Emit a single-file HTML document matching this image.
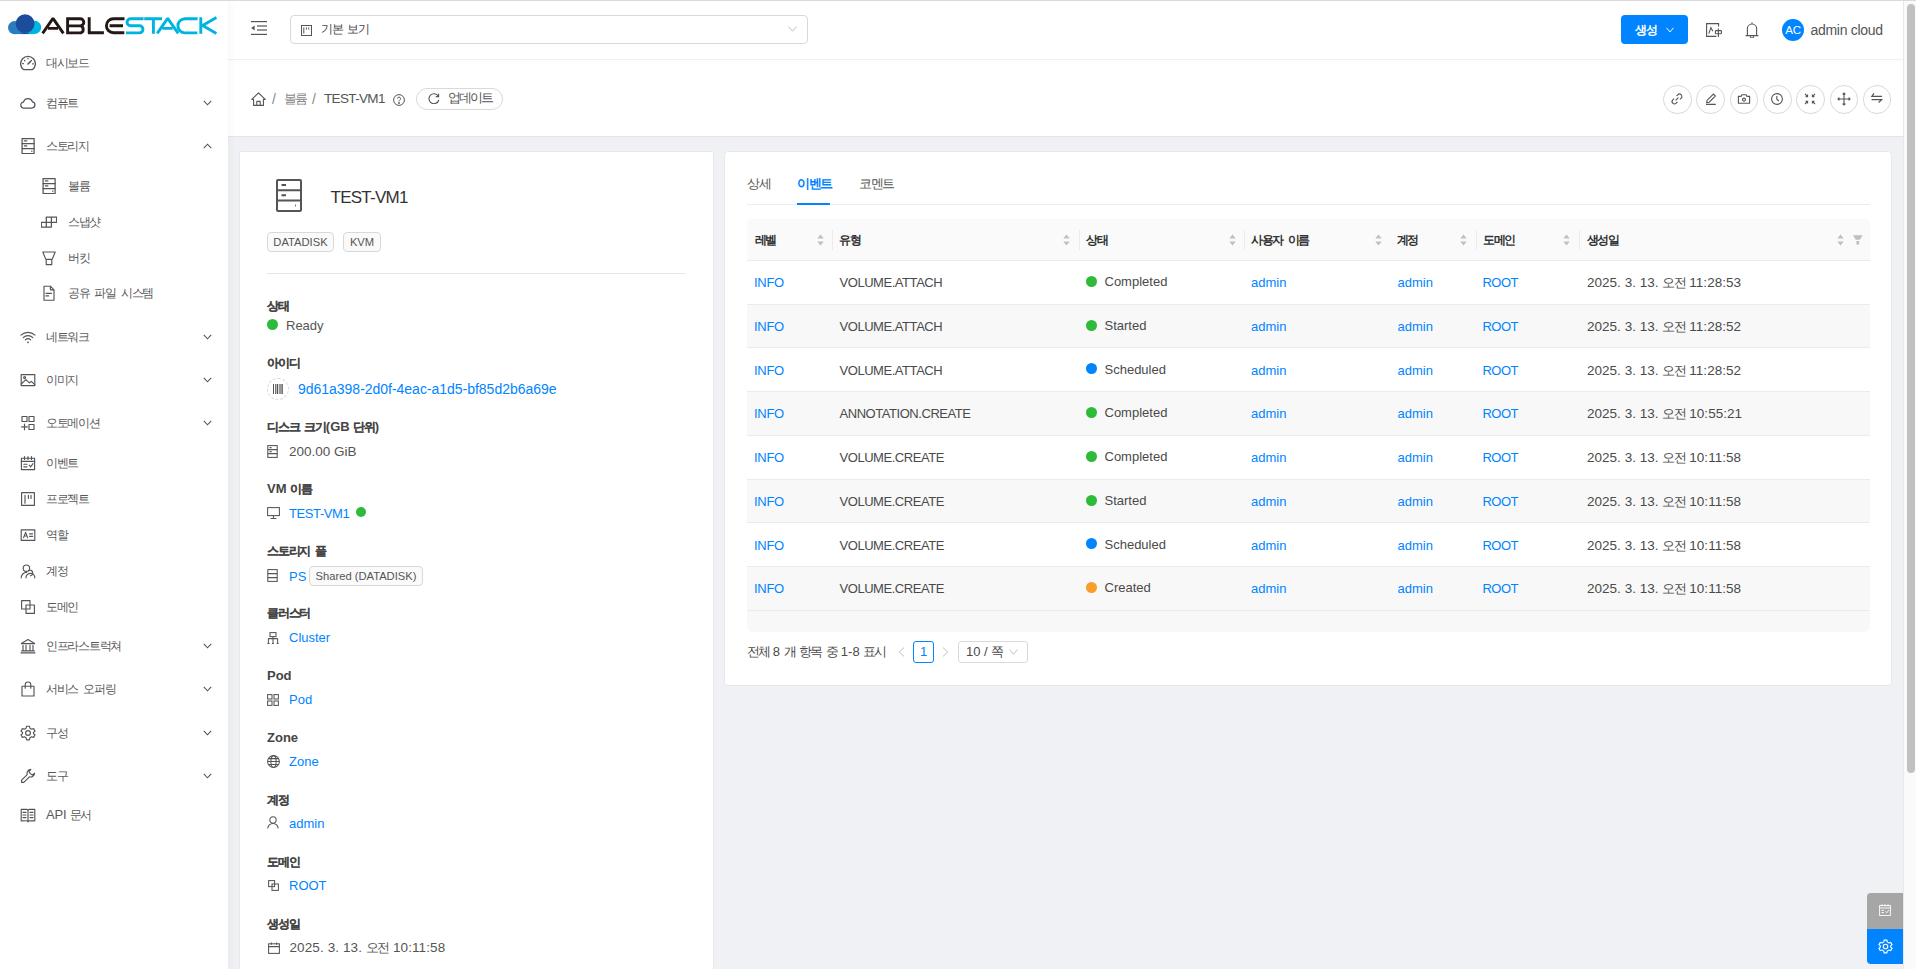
<!DOCTYPE html>
<html><head><meta charset="utf-8">
<style>
*{box-sizing:border-box;margin:0;padding:0}
html,body{width:1916px;height:969px;overflow:hidden;background:#fff}
body{position:relative;font-family:"Liberation Sans",sans-serif;font-size:14px;color:#333}
.abs{position:absolute}
#topline{left:0;top:0;width:1916px;height:1px;background:#d8dadb;z-index:40}
#sider{left:0;top:0;width:228px;height:969px;background:#fff;z-index:5;box-shadow:2px 0 8px rgba(0,0,0,0.04)}
#header{left:228px;top:0;width:1675px;height:60px;background:#fff;border-bottom:1px solid #eef0f3;box-shadow:0 2px 3px rgba(0,0,0,0.012);z-index:2}
#crumb{left:228px;top:60px;width:1675px;height:77px;background:#fff;border-bottom:1px solid #e4e4e4}
#content{left:228px;top:137px;width:1675px;height:832px;background:#f0f1f4}
#scroll{left:1903px;top:0;width:13px;height:969px;background:#fafafa;border-left:1px solid #e8e8e8;z-index:30}
#thumb{left:3px;top:4px;width:8px;height:769px;background:#c1c1c1;border-radius:4px}
.card{background:#fff;border:1px solid #e8e8e8;border-radius:2px}
.mi{position:absolute;left:0;width:228px;height:20px;color:#595959;font-size:14px;line-height:20px}
.mi svg{position:absolute;left:20px;top:2px}
.mi span{position:absolute;left:46px;top:0;white-space:nowrap}
.mi .chev{position:absolute;left:203px;top:7px}
.sub svg{left:41px}
.sub span{left:68px}
.kr{font-size:12.5px;letter-spacing:-1.5px;word-spacing:3px;white-space:nowrap}
.mi span{font-size:12px;letter-spacing:-1.3px;word-spacing:3px}
.tag{height:20px;background:#fafafa;border:1px solid #d9d9d9;border-radius:4px;font-size:11.2px;line-height:18px;color:#555;text-align:center;white-space:nowrap;letter-spacing:0}
.lbl{left:267px;font-weight:bold;color:#454545;font-size:13px;white-space:nowrap}
.val{font-size:13px;color:#555;white-space:nowrap}
.link{color:#0084ff}
.k{font-size:12.5px;letter-spacing:-1.4px;word-spacing:3px}
.lbl .k{font-size:12px;letter-spacing:-1.25px;word-spacing:3px;-webkit-text-stroke:0.1px #454545}
.tab{font-size:13px;color:#555;white-space:nowrap}
.tab .k{font-size:12.5px;letter-spacing:-1.5px}
.th{font-size:13px;font-weight:bold;color:#333;white-space:nowrap}
.th .k{font-size:12.2px;letter-spacing:-1.5px;word-spacing:3px}
.td{font-size:13px;color:#4a4a4a;white-space:nowrap}
.td.link,.val.link{color:#0084ff}
</style></head>
<body>
<div id="topline" class="abs"></div>

<!-- SIDEBAR -->
<div id="sider" class="abs">
<svg class="abs" style="left:0;top:0" width="228" height="50" viewBox="0 0 228 50">
<circle cx="14.6" cy="27.6" r="6.6" fill="#2a7cc0"/>
<circle cx="34.6" cy="27.4" r="6.6" fill="#00b4e1"/>
<path d="M14.6,34.1H25V27H14.6Z" fill="#2a7cc0"/><path d="M25,34.1H34.6V27H25Z" fill="#00b4e1"/>
<circle cx="25.1" cy="23.6" r="9.4" fill="#1c4c9c"/>
<path d="M20.6,31.8 Q25.2,34.4 29.8,31.8 L28,34.1 H22.6 Z" fill="#1c4c9c"/>
<g fill="none" stroke="#231815" stroke-width="2.9" stroke-linejoin="bevel">
<path d="M42.6,33.4L53,18.4L63.4,33.4M48,28.4H58"/>
<path d="M67.6,17.4V33.4 M66.2,18.7H80.2A3.6,3.6 0 0 1 80.2,25.9H70.4 M67.6,25.9H80.8A3.75,3.75 0 0 1 80.8,32.9H66.2"/>
<path d="M89.2,17.2V33.4 M88,32.7H103.9"/>
<path d="M124.5,18.7H113.4A7,7 0 0 0 113.4,32.7H124.3 M109.6,25.8H123"/>
</g>
<g fill="none" stroke="#00b4e0" stroke-width="2.9" stroke-linejoin="bevel">
<path d="M143.6,18.7H130.6A3.55,3.55 0 0 0 130.6,25.8H139.4A3.55,3.55 0 0 1 139.4,32.9H126"/>
<path d="M144.2,18.7H162 M153.4,18.7V33.8"/>
<path d="M157.2,33.4L167.7,18.4L178.2,33.4M162.5,28.4H172.6"/>
<path d="M197.6,18.7H185A7,7 0 0 0 185,32.9H197.4"/>
<path d="M200.8,17.2V33.8 M216.4,17.6L202.6,25.6L216.4,33.6"/>
</g>
</svg>
<div class="mi" style="top:53px"><svg width="16" height="16" viewBox="0 0 16 16" stroke="#555" stroke-width="1.15" fill="none" stroke-linecap="round" stroke-linejoin="round"><path d="M3.4,14.6 A7.4,7.4 0 1 1 12.6,14.6 Z" stroke-width="1.3"/><path d="M8,9 L10.4,6.6" stroke-width="1.5"/><path d="M2.6,8.6h0.8M4.5,5.4l0.3,0.3M8,3.3v0.5M11.4,5.5l-0.3,0.3M13.4,8.8h-0.8" stroke-width="1.3"/></svg><span>대시보드</span></div>
<div class="mi" style="top:93px"><svg width="16" height="16" viewBox="0 0 16 16" stroke="#555" stroke-width="1.15" fill="none" stroke-linecap="round" stroke-linejoin="round"><path d="M3.9,13 H12.2 A3.1,3.1 0 0 0 12.5,6.9 A4.7,4.7 0 0 0 3.5,7.2 A2.9,2.9 0 0 0 3.9,13 Z" stroke-width="1.25"/></svg><span>컴퓨트</span><svg class="chev" width="9" height="6" viewBox="0 0 9 6" stroke="#555" stroke-width="1.1" fill="none"><path d="M0.8,0.8L4.5,4.8L8.2,0.8"/></svg></div>
<div class="mi" style="top:136px"><svg width="16" height="16" viewBox="0 0 16 16" stroke="#555" stroke-width="1.15" fill="none" stroke-linecap="round" stroke-linejoin="round"><rect x="2.1" y="0.5" width="12" height="15" stroke-width="1.25"/><path d="M2.1,5.5H14.1M2.1,10.5H14.1M4.4,2.9H6.8M4.4,7.9H6.8M11.6,13h0.4" stroke-width="1.25"/></svg><span>스토리지</span><svg class="chev" width="9" height="6" viewBox="0 0 9 6" stroke="#555" stroke-width="1.1" fill="none"><path d="M0.8,5.2L4.5,1.2L8.2,5.2"/></svg></div>
<div class="mi sub" style="top:176px"><svg width="16" height="16" viewBox="0 0 16 16" stroke="#555" stroke-width="1.15" fill="none" stroke-linecap="round" stroke-linejoin="round"><rect x="2.1" y="0.5" width="12" height="15" stroke-width="1.25"/><path d="M2.1,5.5H14.1M2.1,10.5H14.1M4.4,2.9H6.8M4.4,7.9H6.8M11.6,13h0.4" stroke-width="1.25"/></svg><span>볼륨</span></div>
<div class="mi sub" style="top:212px"><svg width="16" height="16" viewBox="0 0 16 16" stroke="#555" stroke-width="1.15" fill="none" stroke-linecap="round" stroke-linejoin="round"><path d="M5.3,13.1V3H15.6V8.3H0.3V13.1H10.4V3" stroke-width="1.25"/></svg><span>스냅샷</span></div>
<div class="mi sub" style="top:248px"><svg width="16" height="16" viewBox="0 0 16 16" stroke="#555" stroke-width="1.15" fill="none" stroke-linecap="round" stroke-linejoin="round"><path d="M1.8,2H14.2L11.2,9.4H4.8Z M5.2,9.4V14.6H10.8V9.4"/></svg><span>버킷</span></div>
<div class="mi sub" style="top:283px"><svg width="16" height="16" viewBox="0 0 16 16" stroke="#555" stroke-width="1.15" fill="none" stroke-linecap="round" stroke-linejoin="round"><path d="M3,1.2H9.4L13,4.8V15.2H3Z M9.4,1.2V4.8H13 M5,8.4H10.4M5,10.9H7.6"/></svg><span>공유 파일 시스템</span></div>
<div class="mi" style="top:327px"><svg width="16" height="16" viewBox="0 0 16 16" stroke="#555" stroke-width="1.15" fill="none" stroke-linecap="round" stroke-linejoin="round"><path d="M1,6.2A10.2,10.2 0 0 1 15,6.2 M3.2,8.6A7,7 0 0 1 12.8,8.6 M5.3,10.9A3.9,3.9 0 0 1 10.7,10.9"/><circle cx="8" cy="13.3" r="0.9" fill="#555" stroke="none"/></svg><span>네트워크</span><svg class="chev" width="9" height="6" viewBox="0 0 9 6" stroke="#555" stroke-width="1.1" fill="none"><path d="M0.8,0.8L4.5,4.8L8.2,0.8"/></svg></div>
<div class="mi" style="top:370px"><svg width="16" height="16" viewBox="0 0 16 16" stroke="#555" stroke-width="1.15" fill="none" stroke-linecap="round" stroke-linejoin="round"><rect x="1.2" y="2.6" width="13.6" height="11"/><path d="M1.2,12L6,7.6L9.4,10.8L11.2,9.4L14.8,12.6"/><circle cx="4.6" cy="5.6" r="1"/></svg><span>이미지</span><svg class="chev" width="9" height="6" viewBox="0 0 9 6" stroke="#555" stroke-width="1.1" fill="none"><path d="M0.8,0.8L4.5,4.8L8.2,0.8"/></svg></div>
<div class="mi" style="top:413px"><svg width="16" height="16" viewBox="0 0 16 16" stroke="#555" stroke-width="1.15" fill="none" stroke-linecap="round" stroke-linejoin="round"><rect x="2" y="1.5" width="5" height="5"/><rect x="9" y="1.5" width="5" height="5"/><rect x="9" y="9.5" width="5" height="5"/><path d="M4.5,9V14.8M1.6,11.9H7.4"/></svg><span>오토메이션</span><svg class="chev" width="9" height="6" viewBox="0 0 9 6" stroke="#555" stroke-width="1.1" fill="none"><path d="M0.8,0.8L4.5,4.8L8.2,0.8"/></svg></div>
<div class="mi" style="top:453px"><svg width="16" height="16" viewBox="0 0 16 16" stroke="#555" stroke-width="1.15" fill="none" stroke-linecap="round" stroke-linejoin="round"><rect x="1.4" y="3.2" width="13.2" height="11.4"/><path d="M1.4,6.4H14.6M4.5,1.6V4.4M8,1.6V4.4M11.5,1.6V4.4M3.8,9.2H7M3.8,11.8H7M9.2,10.2L10.6,11.8L13,8.6"/></svg><span>이벤트</span></div>
<div class="mi" style="top:489px"><svg width="16" height="16" viewBox="0 0 16 16" stroke="#555" stroke-width="1.15" fill="none" stroke-linecap="round" stroke-linejoin="round"><rect x="1.6" y="1.6" width="12.8" height="12.8"/><path d="M5,4.2V12.2M8.4,4.2V7.4M11,4.2V7.4"/></svg><span>프로젝트</span></div>
<div class="mi" style="top:525px"><svg width="16" height="16" viewBox="0 0 16 16" stroke="#555" stroke-width="1.15" fill="none" stroke-linecap="round" stroke-linejoin="round"><rect x="1.2" y="2.8" width="13.6" height="10.6"/><path d="M3.6,10.6L5.6,5.4L7.6,10.6M4.2,9H7M9.6,6.8H12.6M9.6,9.4H12.6"/></svg><span>역할</span></div>
<div class="mi" style="top:561px"><svg width="16" height="16" viewBox="0 0 16 16" stroke="#555" stroke-width="1.15" fill="none" stroke-linecap="round" stroke-linejoin="round"><circle cx="6.4" cy="5.2" r="3.2"/><path d="M1.2,14.8A5.4,5.4 0 0 1 6.6,9.4 M8.6,7.6A2.8,2.8 0 1 1 10.4,12.8 M6,14.8A4.4,4.4 0 0 1 14.8,14.8"/></svg><span>계정</span></div>
<div class="mi" style="top:597px"><svg width="16" height="16" viewBox="0 0 16 16" stroke="#555" stroke-width="1.15" fill="none" stroke-linecap="round" stroke-linejoin="round"><rect x="1.6" y="1.6" width="8.4" height="8.4"/><rect x="6" y="6" width="8.4" height="8.4"/></svg><span>도메인</span></div>
<div class="mi" style="top:636px"><svg width="16" height="16" viewBox="0 0 16 16" stroke="#555" stroke-width="1.15" fill="none" stroke-linecap="round" stroke-linejoin="round"><path d="M1.4,5.6L8,1.6L14.6,5.6Z M3,7.4V12.6M6,7.4V12.6M10,7.4V12.6M13,7.4V12.6M1.6,12.8H14.4M1,14.8H15"/></svg><span>인프라스트럭쳐</span><svg class="chev" width="9" height="6" viewBox="0 0 9 6" stroke="#555" stroke-width="1.1" fill="none"><path d="M0.8,0.8L4.5,4.8L8.2,0.8"/></svg></div>
<div class="mi" style="top:679px"><svg width="16" height="16" viewBox="0 0 16 16" stroke="#555" stroke-width="1.15" fill="none" stroke-linecap="round" stroke-linejoin="round"><path d="M2,5.2H14V15H2Z M5.2,7.2V3.8A2.8,2.8 0 0 1 10.8,3.8V7.2"/></svg><span>서비스 오퍼링</span><svg class="chev" width="9" height="6" viewBox="0 0 9 6" stroke="#555" stroke-width="1.1" fill="none"><path d="M0.8,0.8L4.5,4.8L8.2,0.8"/></svg></div>
<div class="mi" style="top:723px"><svg width="16" height="16" viewBox="0 0 16 16" stroke="#555" stroke-width="1.15" fill="none" stroke-linecap="round" stroke-linejoin="round"><path d="M6.6,1.2H9.4L9.9,3.2L11.6,4.2L13.6,3.6L15,6L13.5,7.4V8.6L15,10L13.6,12.4L11.6,11.8L9.9,12.8L9.4,14.8H6.6L6.1,12.8L4.4,11.8L2.4,12.4L1,10L2.5,8.6V7.4L1,6L2.4,3.6L4.4,4.2L6.1,3.2Z"/><circle cx="8" cy="8" r="2.4"/></svg><span>구성</span><svg class="chev" width="9" height="6" viewBox="0 0 9 6" stroke="#555" stroke-width="1.1" fill="none"><path d="M0.8,0.8L4.5,4.8L8.2,0.8"/></svg></div>
<div class="mi" style="top:766px"><svg width="16" height="16" viewBox="0 0 16 16" stroke="#555" stroke-width="1.15" fill="none" stroke-linecap="round" stroke-linejoin="round"><path d="M10.8,1.4A4,4 0 0 0 7.2,6.6L1.6,12.2V14.4H3.8L9.4,8.8A4,4 0 0 0 14.6,5.2L12.4,7L10.4,5.6L9,3.6Z"/></svg><span>도구</span><svg class="chev" width="9" height="6" viewBox="0 0 9 6" stroke="#555" stroke-width="1.1" fill="none"><path d="M0.8,0.8L4.5,4.8L8.2,0.8"/></svg></div>
<div class="mi" style="top:805px"><svg width="16" height="16" viewBox="0 0 16 16" stroke="#555" stroke-width="1.15" fill="none" stroke-linecap="round" stroke-linejoin="round"><path d="M1.2,2.4H6.6A1.4,1.4 0 0 1 8,3.8A1.4,1.4 0 0 1 9.4,2.4H14.8V13.8H9.4A1.4,1.4 0 0 0 8,15A1.4,1.4 0 0 0 6.6,13.8H1.2Z M8,3.8V15 M3,5.4H6M3,8H6M3,10.6H6M10,5.4H13M10,8H13M10,10.6H13"/></svg><span style="font-size:13px;letter-spacing:-0.2px;word-spacing:0">API <span style="position:static;font-size:12px;letter-spacing:-1.3px">문서</span></span></div>
</div>

<!-- HEADER -->
<div id="header" class="abs">
<svg class="abs" style="left:23px;top:21px" width="16" height="14" viewBox="0 0 16 14" fill="#555"><rect x="0" y="0" width="16" height="1.2"/><rect x="6" y="4.4" width="10" height="1.2"/><rect x="6" y="8.4" width="10" height="1.2"/><rect x="0" y="12.8" width="16" height="1.2"/><path d="M0.2,7L3.6,4.6V9.4Z"/></svg>
<div class="abs" style="left:62px;top:15px;width:518px;height:29px;border:1px solid #d9d9d9;border-radius:4px"></div>
<svg class="abs" style="left:73px;top:25px" width="11" height="11" viewBox="0 0 11 11" fill="none" stroke="#555" stroke-width="1"><rect x="0.5" y="0.5" width="10" height="10"/><path d="M2.8,2.4V8.6M5.4,2.4V4.6M7.8,2.4V4.6"/></svg>
<div class="abs kr" style="left:93px;top:21px;color:#444;font-size:12px;letter-spacing:-1.3px">기본 보기</div>
<svg class="abs" style="left:560px;top:26px" width="9" height="6" viewBox="0 0 9 6" fill="none" stroke="#bfbfbf" stroke-width="1"><path d="M0.5,0.5L4.5,5.2L8.5,0.5"/></svg>
<div class="abs" style="left:1393px;top:15px;width:67px;height:29px;background:#0084ff;border-radius:4px"></div>
<div class="abs kr" style="left:1407px;top:22px;color:#fff;font-size:12px;letter-spacing:-1.2px;font-weight:bold">생성</div>
<svg class="abs" style="left:1437.5px;top:26.5px" width="8" height="6" viewBox="0 0 9 6" fill="none" stroke="#fff" stroke-width="1.1"><path d="M0.5,0.5L4.5,5.2L8.5,0.5"/></svg>
<svg class="abs" style="left:1478px;top:23px" width="17" height="15" viewBox="0 0 17 15" fill="none" stroke="#555" stroke-width="1.1"><path d="M12.6,3.4V0.6H0.6V13.4H10.4"/><path d="M2.8,10.6L4.9,4.6L6.8,8.2"/><rect x="9.4" y="7.6" width="6" height="3.2" rx="0.6"/><path d="M12.4,5.4V13.9"/></svg>
<svg class="abs" style="left:1517px;top:22px" width="14" height="16" viewBox="0 0 14 16" fill="none" stroke="#555" stroke-width="1.1"><path d="M7,0.4V1.8M2.4,13.4V6.6A4.6,4.6 0 0 1 11.6,6.6V13.4M0.6,13.6H13.4M5.4,14.4A1.6,1.6 0 0 0 8.6,14.4"/></svg>
<div class="abs" style="left:1554px;top:19px;width:22px;height:22px;border-radius:50%;background:#0084ff;color:#fff;font-size:11.5px;line-height:22px;text-align:center;letter-spacing:-0.3px">AC</div>
<div class="abs" style="left:1582.5px;top:22px;color:#555;font-size:14px;letter-spacing:-0.3px">admin cloud</div>
</div>
<div id="crumb" class="abs">
<svg class="abs" style="left:23px;top:32px" width="15" height="14" viewBox="0 0 15 14" fill="none" stroke="#555" stroke-width="1.1" stroke-linejoin="round"><path d="M7.5,0.8L0.8,7.4H2.6V13.4H12.4V7.4H14.2Z M5.8,13.4V9.4H9.2V13.4"/></svg>
<div class="abs" style="left:44px;top:31px;color:#888">/</div>
<div class="abs kr" style="left:55.5px;top:30.5px;color:#888;letter-spacing:-1.8px">볼륨</div>
<div class="abs" style="left:84px;top:31px;color:#888">/</div>
<div class="abs" style="left:96px;top:31px;color:#555;font-size:13.5px;letter-spacing:-0.65px">TEST-VM1</div>
<svg class="abs" style="left:165px;top:34px" width="12" height="12" viewBox="0 0 12 12" fill="none" stroke="#555" stroke-width="1"><circle cx="6" cy="6" r="5.4"/><path d="M4.4,4.6A1.6,1.6 0 1 1 6.6,6.2C6.1,6.5 6,6.8 6,7.4"/><circle cx="6" cy="9" r="0.5" fill="#555"/></svg>
<div class="abs" style="left:188px;top:28px;width:87px;height:22px;border:1px solid #d9d9d9;border-radius:11px"></div>
<svg class="abs" style="left:200px;top:33px" width="12" height="11" viewBox="0 0 12 11" fill="none" stroke="#555" stroke-width="1.1"><path d="M10.4,3.4A5,5 0 1 0 10.8,7"/><path d="M10.6,0.8V3.6H7.8" /></svg>
<div class="abs kr" style="left:219.5px;top:30px;color:#555;letter-spacing:-1.8px">업데이트</div>
</div>
<div id="content" class="abs"></div>

<div class="abs card" style="left:239px;top:151px;width:475px;height:830px"></div>
<svg class="abs" style="left:276px;top:179px" width="26" height="33" viewBox="0 0 26 33" fill="none" stroke="#555" stroke-width="2"><rect x="1" y="1" width="24" height="31" rx="1"/><path d="M1,11.2H25M1,21.4H25M5.5,6H10M5.5,16.2H10M19,26.6h0.8"/></svg>
<div class="abs" style="left:330.5px;top:187.5px;font-size:17px;color:#333;letter-spacing:-0.75px">TEST-VM1</div>
<div class="abs tag" style="left:267px;top:232px;width:67px">DATADISK</div>
<div class="abs tag" style="left:343px;top:232px;width:38px">KVM</div>
<div class="abs" style="left:267px;top:273px;width:419px;height:1px;background:#e8e8e8"></div>

<div class="abs lbl" style="top:298px"><span class="k">상태</span></div>
<div class="abs" style="left:267px;top:319px;width:11px;height:11px;border-radius:50%;background:#2dbb3a"></div>
<div class="abs val" style="left:286px;top:318px">Ready</div>

<div class="abs lbl" style="top:355px"><span class="k">아이디</span></div>
<div class="abs" style="left:267px;top:378px;width:22px;height:22px;border-radius:50%;border:1px dashed #d9d9d9"></div>
<svg class="abs" style="left:273px;top:384px" width="10" height="10" viewBox="0 0 10 10" fill="#555"><rect x="0" y="0" width="1" height="10"/><rect x="2" y="0" width="0.8" height="10"/><rect x="3.6" y="0" width="1.4" height="10"/><rect x="5.8" y="0" width="0.8" height="10"/><rect x="7.4" y="0" width="1.2" height="10"/><rect x="9.2" y="0" width="0.8" height="10"/></svg>
<div class="abs val link" style="left:298px;top:381px;font-size:14px;letter-spacing:-0.02px">9d61a398-2d0f-4eac-a1d5-bf85d2b6a69e</div>

<div class="abs lbl" style="top:419px"><span class="k">디스크 크기</span>(GB <span class="k">단위</span>)</div>
<svg class="abs" style="left:267px;top:445px" width="11" height="13" viewBox="0 0 11 13" fill="none" stroke="#555" stroke-width="1.05"><rect x="0.8" y="0.6" width="9.4" height="11.8"/><path d="M0.8,4.6H10.2M0.8,8.6H10.2M2.6,2.6H4.6M2.6,6.6H4.6"/></svg>
<div class="abs val" style="left:289px;top:444px;font-size:13.5px">200.00 GiB</div>

<div class="abs lbl" style="top:481px">VM <span class="k">이름</span></div>
<svg class="abs" style="left:267px;top:507px" width="13" height="12" viewBox="0 0 13 12" fill="none" stroke="#555" stroke-width="1.05"><rect x="0.6" y="0.6" width="11.8" height="8"/><path d="M6.5,8.6V11.2M3.6,11.4H9.4"/></svg>
<div class="abs val link" style="left:289px;top:506px;letter-spacing:-0.4px">TEST-VM1</div>
<div class="abs" style="left:356px;top:507px;width:10px;height:10px;border-radius:50%;background:#2dbb3a"></div>

<div class="abs lbl" style="top:543px"><span class="k">스토리지 풀</span></div>
<svg class="abs" style="left:267px;top:569px" width="11" height="13" viewBox="0 0 11 13" fill="none" stroke="#555" stroke-width="1.05"><rect x="0.8" y="0.6" width="9.4" height="11.8"/><path d="M0.8,4.6H10.2M0.8,8.6H10.2"/></svg>
<div class="abs val link" style="left:289px;top:569px">PS</div>
<div class="abs tag" style="left:309px;top:566px;width:114px;height:20px">Shared (DATADISK)</div>

<div class="abs lbl" style="top:605px"><span class="k">클러스터</span></div>
<svg class="abs" style="left:267px;top:632px" width="12" height="12" viewBox="0 0 12 12" fill="none" stroke="#555" stroke-width="1.05"><rect x="3" y="0.6" width="6" height="4"/><path d="M6,4.6V6.6M1.4,6.6H10.6M1.4,6.6V11.4M6,6.6V11.4M10.6,6.6V11.4M0.4,11.4H2.6M5,11.4H7M9.6,11.4H11.6"/></svg>
<div class="abs val link" style="left:289px;top:630px">Cluster</div>

<div class="abs lbl" style="top:668px">Pod</div>
<svg class="abs" style="left:267px;top:694px" width="12" height="12" viewBox="0 0 12 12" fill="none" stroke="#555" stroke-width="1.05"><rect x="0.6" y="0.6" width="4.4" height="4.4"/><rect x="7" y="0.6" width="4.4" height="4.4"/><rect x="0.6" y="7" width="4.4" height="4.4"/><rect x="7" y="7" width="4.4" height="4.4"/></svg>
<div class="abs val link" style="left:289px;top:692px">Pod</div>

<div class="abs lbl" style="top:730px">Zone</div>
<svg class="abs" style="left:267px;top:755px" width="13" height="13" viewBox="0 0 13 13" fill="none" stroke="#555" stroke-width="1.05"><circle cx="6.5" cy="6.5" r="5.9"/><ellipse cx="6.5" cy="6.5" rx="2.6" ry="5.9"/><path d="M0.6,6.5H12.4M1.4,3.6H11.6M1.4,9.4H11.6"/></svg>
<div class="abs val link" style="left:289px;top:754px">Zone</div>

<div class="abs lbl" style="top:792px"><span class="k">계정</span></div>
<svg class="abs" style="left:267px;top:816px" width="12" height="13" viewBox="0 0 12 13" fill="none" stroke="#555" stroke-width="1.05"><circle cx="6" cy="4" r="3.2"/><path d="M0.8,12.6A5.2,5.2 0 0 1 11.2,12.6"/></svg>
<div class="abs val link" style="left:289px;top:816px">admin</div>

<div class="abs lbl" style="top:854px"><span class="k">도메인</span></div>
<svg class="abs" style="left:268px;top:880px" width="11" height="11" viewBox="0 0 11 11" fill="none" stroke="#555" stroke-width="1.05"><rect x="0.6" y="0.6" width="6" height="6"/><rect x="4" y="4" width="6.4" height="6.4"/></svg>
<div class="abs val link" style="left:289px;top:878px">ROOT</div>

<div class="abs lbl" style="top:916px"><span class="k">생성일</span></div>
<svg class="abs" style="left:267.5px;top:942px" width="12" height="12" viewBox="0 0 12 12" fill="none" stroke="#555" stroke-width="1.05"><rect x="0.6" y="1.8" width="10.8" height="9.6"/><path d="M0.6,4.6H11.4M3.4,0.4V2.8M8.6,0.4V2.8"/></svg>
<div class="abs val" style="left:289.5px;top:940px;font-size:13.5px;letter-spacing:0.1px">2025. 3. 13. <span class="k">오전</span> 10:11:58</div>

<div class="abs card" style="left:724px;top:151px;width:1168px;height:535px;border-radius:4px"></div>
<div class="abs tab" style="left:747px;top:176px"><span class="k">상세</span></div>
<div class="abs tab" style="left:797px;top:176px;color:#0084ff;font-weight:bold"><span class="k">이벤트</span></div>
<div class="abs tab" style="left:859px;top:176px"><span class="k">코멘트</span></div>
<div class="abs" style="left:747px;top:204px;width:1123px;height:1px;background:#ececec"></div>
<div class="abs" style="left:797px;top:203px;width:33px;height:2px;background:#0084ff"></div>
<div class="abs" style="left:747px;top:219px;width:1123px;height:42px;background:#fafafa;border-bottom:1px solid #ebebeb;border-radius:5px 5px 0 0"></div>
<div class="abs th" style="left:754.5px;top:232px"><span class="k">레벨</span></div>
<svg class="abs" style="left:816.6px;top:233.5px" width="7" height="12" viewBox="0 0 7 12" fill="#bfbfbf"><path d="M0.3,4.6L3.5,0.4L6.7,4.6Z M0.3,7.4L3.5,11.6L6.7,7.4Z"/></svg>
<div class="abs th" style="left:839.0px;top:232px"><span class="k">유형</span></div>
<svg class="abs" style="left:1063.4px;top:233.5px" width="7" height="12" viewBox="0 0 7 12" fill="#bfbfbf"><path d="M0.3,4.6L3.5,0.4L6.7,4.6Z M0.3,7.4L3.5,11.6L6.7,7.4Z"/></svg>
<div class="abs th" style="left:1086.1px;top:232px"><span class="k">상태</span></div>
<svg class="abs" style="left:1228.5px;top:233.5px" width="7" height="12" viewBox="0 0 7 12" fill="#bfbfbf"><path d="M0.3,4.6L3.5,0.4L6.7,4.6Z M0.3,7.4L3.5,11.6L6.7,7.4Z"/></svg>
<div class="abs th" style="left:1251.2px;top:232px"><span class="k">사용자 이름</span></div>
<svg class="abs" style="left:1374.5px;top:233.5px" width="7" height="12" viewBox="0 0 7 12" fill="#bfbfbf"><path d="M0.3,4.6L3.5,0.4L6.7,4.6Z M0.3,7.4L3.5,11.6L6.7,7.4Z"/></svg>
<div class="abs th" style="left:1396.5px;top:232px"><span class="k">계정</span></div>
<svg class="abs" style="left:1460.3px;top:233.5px" width="7" height="12" viewBox="0 0 7 12" fill="#bfbfbf"><path d="M0.3,4.6L3.5,0.4L6.7,4.6Z M0.3,7.4L3.5,11.6L6.7,7.4Z"/></svg>
<div class="abs th" style="left:1483.0px;top:232px"><span class="k">도메인</span></div>
<svg class="abs" style="left:1563.2px;top:233.5px" width="7" height="12" viewBox="0 0 7 12" fill="#bfbfbf"><path d="M0.3,4.6L3.5,0.4L6.7,4.6Z M0.3,7.4L3.5,11.6L6.7,7.4Z"/></svg>
<div class="abs th" style="left:1586.8px;top:232px"><span class="k">생성일</span></div>
<svg class="abs" style="left:1836.7px;top:233.5px" width="7" height="12" viewBox="0 0 7 12" fill="#bfbfbf"><path d="M0.3,4.6L3.5,0.4L6.7,4.6Z M0.3,7.4L3.5,11.6L6.7,7.4Z"/></svg>
<div class="abs" style="left:831.5px;top:230px;width:1px;height:20px;background:#ececec"></div>
<div class="abs" style="left:1078.6px;top:230px;width:1px;height:20px;background:#ececec"></div>
<div class="abs" style="left:1243.7px;top:230px;width:1px;height:20px;background:#ececec"></div>
<div class="abs" style="left:1475.5px;top:230px;width:1px;height:20px;background:#ececec"></div>
<div class="abs" style="left:1579.3px;top:230px;width:1px;height:20px;background:#ececec"></div>
<svg class="abs" style="left:1852.5px;top:234.5px" width="10" height="10" viewBox="0 0 10 10" fill="#bfbfbf"><path d="M0,0.2H9.6L6.8,4.8H2.8Z M3.4,6H6.2V9.4H3.4Z"/></svg>
<div class="abs" style="left:747px;top:261.00px;width:1123px;height:43.74px;background:#fff;border-bottom:1px solid #ebebeb"></div>
<div class="abs td link" style="left:754px;top:275.20px;letter-spacing:-0.3px">INFO</div>
<div class="abs td" style="left:839.5px;top:275.20px;letter-spacing:-0.45px">VOLUME.ATTACH</div>
<div class="abs" style="left:1086px;top:276.00px;width:11px;height:11px;border-radius:50%;background:#2dbb3a"></div>
<div class="abs td" style="left:1104.5px;top:274.20px">Completed</div>
<div class="abs td link" style="left:1251px;top:275.20px">admin</div>
<div class="abs td link" style="left:1397.5px;top:275.20px">admin</div>
<div class="abs td link" style="left:1482.5px;top:275.20px;letter-spacing:-0.55px">ROOT</div>
<div class="abs td" style="left:1587px;top:275.20px;font-size:13.5px;letter-spacing:0.02px">2025. 3. 13. <span class="k">오전</span> 11:28:53</div>
<div class="abs" style="left:747px;top:304.74px;width:1123px;height:43.74px;background:#f8f8f8;border-bottom:1px solid #ebebeb"></div>
<div class="abs td link" style="left:754px;top:318.94px;letter-spacing:-0.3px">INFO</div>
<div class="abs td" style="left:839.5px;top:318.94px;letter-spacing:-0.45px">VOLUME.ATTACH</div>
<div class="abs" style="left:1086px;top:319.74px;width:11px;height:11px;border-radius:50%;background:#2dbb3a"></div>
<div class="abs td" style="left:1104.5px;top:317.94px">Started</div>
<div class="abs td link" style="left:1251px;top:318.94px">admin</div>
<div class="abs td link" style="left:1397.5px;top:318.94px">admin</div>
<div class="abs td link" style="left:1482.5px;top:318.94px;letter-spacing:-0.55px">ROOT</div>
<div class="abs td" style="left:1587px;top:318.94px;font-size:13.5px;letter-spacing:0.02px">2025. 3. 13. <span class="k">오전</span> 11:28:52</div>
<div class="abs" style="left:747px;top:348.48px;width:1123px;height:43.74px;background:#fff;border-bottom:1px solid #ebebeb"></div>
<div class="abs td link" style="left:754px;top:362.68px;letter-spacing:-0.3px">INFO</div>
<div class="abs td" style="left:839.5px;top:362.68px;letter-spacing:-0.45px">VOLUME.ATTACH</div>
<div class="abs" style="left:1086px;top:363.48px;width:11px;height:11px;border-radius:50%;background:#0084ff"></div>
<div class="abs td" style="left:1104.5px;top:361.68px">Scheduled</div>
<div class="abs td link" style="left:1251px;top:362.68px">admin</div>
<div class="abs td link" style="left:1397.5px;top:362.68px">admin</div>
<div class="abs td link" style="left:1482.5px;top:362.68px;letter-spacing:-0.55px">ROOT</div>
<div class="abs td" style="left:1587px;top:362.68px;font-size:13.5px;letter-spacing:0.02px">2025. 3. 13. <span class="k">오전</span> 11:28:52</div>
<div class="abs" style="left:747px;top:392.22px;width:1123px;height:43.74px;background:#f8f8f8;border-bottom:1px solid #ebebeb"></div>
<div class="abs td link" style="left:754px;top:406.42px;letter-spacing:-0.3px">INFO</div>
<div class="abs td" style="left:839.5px;top:406.42px;letter-spacing:-0.45px">ANNOTATION.CREATE</div>
<div class="abs" style="left:1086px;top:407.22px;width:11px;height:11px;border-radius:50%;background:#2dbb3a"></div>
<div class="abs td" style="left:1104.5px;top:405.42px">Completed</div>
<div class="abs td link" style="left:1251px;top:406.42px">admin</div>
<div class="abs td link" style="left:1397.5px;top:406.42px">admin</div>
<div class="abs td link" style="left:1482.5px;top:406.42px;letter-spacing:-0.55px">ROOT</div>
<div class="abs td" style="left:1587px;top:406.42px;font-size:13.5px;letter-spacing:0.02px">2025. 3. 13. <span class="k">오전</span> 10:55:21</div>
<div class="abs" style="left:747px;top:435.96px;width:1123px;height:43.74px;background:#fff;border-bottom:1px solid #ebebeb"></div>
<div class="abs td link" style="left:754px;top:450.16px;letter-spacing:-0.3px">INFO</div>
<div class="abs td" style="left:839.5px;top:450.16px;letter-spacing:-0.45px">VOLUME.CREATE</div>
<div class="abs" style="left:1086px;top:450.96px;width:11px;height:11px;border-radius:50%;background:#2dbb3a"></div>
<div class="abs td" style="left:1104.5px;top:449.16px">Completed</div>
<div class="abs td link" style="left:1251px;top:450.16px">admin</div>
<div class="abs td link" style="left:1397.5px;top:450.16px">admin</div>
<div class="abs td link" style="left:1482.5px;top:450.16px;letter-spacing:-0.55px">ROOT</div>
<div class="abs td" style="left:1587px;top:450.16px;font-size:13.5px;letter-spacing:0.02px">2025. 3. 13. <span class="k">오전</span> 10:11:58</div>
<div class="abs" style="left:747px;top:479.70px;width:1123px;height:43.74px;background:#f8f8f8;border-bottom:1px solid #ebebeb"></div>
<div class="abs td link" style="left:754px;top:493.90px;letter-spacing:-0.3px">INFO</div>
<div class="abs td" style="left:839.5px;top:493.90px;letter-spacing:-0.45px">VOLUME.CREATE</div>
<div class="abs" style="left:1086px;top:494.70px;width:11px;height:11px;border-radius:50%;background:#2dbb3a"></div>
<div class="abs td" style="left:1104.5px;top:492.90px">Started</div>
<div class="abs td link" style="left:1251px;top:493.90px">admin</div>
<div class="abs td link" style="left:1397.5px;top:493.90px">admin</div>
<div class="abs td link" style="left:1482.5px;top:493.90px;letter-spacing:-0.55px">ROOT</div>
<div class="abs td" style="left:1587px;top:493.90px;font-size:13.5px;letter-spacing:0.02px">2025. 3. 13. <span class="k">오전</span> 10:11:58</div>
<div class="abs" style="left:747px;top:523.44px;width:1123px;height:43.74px;background:#fff;border-bottom:1px solid #ebebeb"></div>
<div class="abs td link" style="left:754px;top:537.64px;letter-spacing:-0.3px">INFO</div>
<div class="abs td" style="left:839.5px;top:537.64px;letter-spacing:-0.45px">VOLUME.CREATE</div>
<div class="abs" style="left:1086px;top:538.44px;width:11px;height:11px;border-radius:50%;background:#0084ff"></div>
<div class="abs td" style="left:1104.5px;top:536.64px">Scheduled</div>
<div class="abs td link" style="left:1251px;top:537.64px">admin</div>
<div class="abs td link" style="left:1397.5px;top:537.64px">admin</div>
<div class="abs td link" style="left:1482.5px;top:537.64px;letter-spacing:-0.55px">ROOT</div>
<div class="abs td" style="left:1587px;top:537.64px;font-size:13.5px;letter-spacing:0.02px">2025. 3. 13. <span class="k">오전</span> 10:11:58</div>
<div class="abs" style="left:747px;top:567.18px;width:1123px;height:43.74px;background:#f8f8f8;border-bottom:1px solid #ebebeb"></div>
<div class="abs td link" style="left:754px;top:581.38px;letter-spacing:-0.3px">INFO</div>
<div class="abs td" style="left:839.5px;top:581.38px;letter-spacing:-0.45px">VOLUME.CREATE</div>
<div class="abs" style="left:1086px;top:582.18px;width:11px;height:11px;border-radius:50%;background:#fa9d2a"></div>
<div class="abs td" style="left:1104.5px;top:580.38px">Created</div>
<div class="abs td link" style="left:1251px;top:581.38px">admin</div>
<div class="abs td link" style="left:1397.5px;top:581.38px">admin</div>
<div class="abs td link" style="left:1482.5px;top:581.38px;letter-spacing:-0.55px">ROOT</div>
<div class="abs td" style="left:1587px;top:581.38px;font-size:13.5px;letter-spacing:0.02px">2025. 3. 13. <span class="k">오전</span> 10:11:58</div>
<div class="abs" style="left:747px;top:611px;width:1123px;height:20.5px;background:#f8f8f8;border-radius:0 0 6px 6px"></div>
<div class="abs td" style="left:747px;top:644px"><span class="k" style="letter-spacing:-1.9px">전체</span> 8 <span class="k" style="letter-spacing:-1.9px">개 항목 중</span> 1-8 <span class="k" style="letter-spacing:-1.9px">표시</span></div>
<svg class="abs" style="left:898px;top:647px" width="7" height="10" viewBox="0 0 7 10" fill="none" stroke="#bfbfbf" stroke-width="1"><path d="M6,0.6L1.2,5L6,9.4"/></svg>
<div class="abs" style="left:913px;top:641px;width:21px;height:22px;border:1px solid #0084ff;border-radius:3px;color:#0084ff;font-size:13px;line-height:20px;text-align:center">1</div>
<svg class="abs" style="left:942px;top:647px" width="7" height="10" viewBox="0 0 7 10" fill="none" stroke="#bfbfbf" stroke-width="1"><path d="M1,0.6L5.8,5L1,9.4"/></svg>
<div class="abs" style="left:958px;top:641px;width:70px;height:22px;border:1px solid #d9d9d9;border-radius:3px"></div>
<div class="abs td" style="left:966px;top:644.00px">10 / <span class="k">쪽</span></div>
<svg class="abs" style="left:1009px;top:649px" width="9" height="6" viewBox="0 0 9 6" fill="none" stroke="#bfbfbf" stroke-width="1"><path d="M0.5,0.5L4.5,5.2L8.5,0.5"/></svg>
<div class="abs" style="left:1663px;top:85px;width:28.5px;height:28.5px;border:1px solid #d9d9d9;border-radius:50%"></div>
<svg class="abs" style="left:1669.25px;top:91.25px" width="16" height="16" viewBox="0 0 16 16" fill="none" stroke="#555" stroke-width="1.1"><path d="M6.6,9.4L9.4,6.6 M7.6,5L8.8,3.8A2,2 0 0 1 12.2,7.2L11,8.4 M5,7.6L3.8,8.8A2,2 0 0 0 7.2,12.2L8.4,11"/></svg>
<div class="abs" style="left:1696.3px;top:85px;width:28.5px;height:28.5px;border:1px solid #d9d9d9;border-radius:50%"></div>
<svg class="abs" style="left:1702.55px;top:91.25px" width="16" height="16" viewBox="0 0 16 16" fill="none" stroke="#555" stroke-width="1.1"><path d="M3.6,11.6L4.2,9.2L10.4,3L12.4,5L6.2,11.2Z M3,13.4H12.8"/></svg>
<div class="abs" style="left:1729.5px;top:85px;width:28.5px;height:28.5px;border:1px solid #d9d9d9;border-radius:50%"></div>
<svg class="abs" style="left:1735.75px;top:91.25px" width="16" height="16" viewBox="0 0 16 16" fill="none" stroke="#555" stroke-width="1.1"><path d="M2.4,5.4H5L6,3.8H10L11,5.4H13.6V12.2H2.4Z"/><circle cx="8" cy="8.6" r="1.5"/></svg>
<div class="abs" style="left:1763px;top:85px;width:28.5px;height:28.5px;border:1px solid #d9d9d9;border-radius:50%"></div>
<svg class="abs" style="left:1769.25px;top:91.25px" width="16" height="16" viewBox="0 0 16 16" fill="none" stroke="#555" stroke-width="1.1"><circle cx="8" cy="8" r="5.4"/><path d="M7.8,5V8.2L9.8,10"/></svg>
<div class="abs" style="left:1796.2px;top:85px;width:28.5px;height:28.5px;border:1px solid #d9d9d9;border-radius:50%"></div>
<svg class="abs" style="left:1802.45px;top:91.25px" width="16" height="16" viewBox="0 0 16 16" fill="none" stroke="#555" stroke-width="1.1"><path d="M3,3L5.6,5.6M13,3L10.4,5.6M3,13L5.6,10.4M13,13L10.4,10.4M3.6,5.6H5.6V3.6M12.4,5.6H10.4V3.6M3.6,10.4H5.6V12.4M12.4,10.4H10.4V12.4"/></svg>
<div class="abs" style="left:1829.5px;top:85px;width:28.5px;height:28.5px;border:1px solid #d9d9d9;border-radius:50%"></div>
<svg class="abs" style="left:1835.75px;top:91.25px" width="16" height="16" viewBox="0 0 16 16" fill="none" stroke="#555" stroke-width="1.1"><path d="M8,2V14M2,8H14 M6.6,3.4L8,2L9.4,3.4M6.6,12.6L8,14L9.4,12.6M3.4,6.6L2,8L3.4,9.4M12.6,6.6L14,8L12.6,9.4"/></svg>
<div class="abs" style="left:1862.5px;top:85px;width:28.5px;height:28.5px;border:1px solid #d9d9d9;border-radius:50%"></div>
<svg class="abs" style="left:1868.75px;top:91.25px" width="16" height="16" viewBox="0 0 16 16" fill="none" stroke="#555" stroke-width="1.1"><path d="M12.9,5.4H2.8L5,2.3 M2.6,8.6H12.7L9.6,11.5" stroke-width="1.2"/></svg>
<div class="abs" style="left:1867px;top:893px;width:36px;height:36px;background:#a6a6a6;border-radius:4px 0 0 0"></div>
<svg class="abs" style="left:1879px;top:904px" width="12" height="12" viewBox="0 0 12 12" fill="none" stroke="#fff" stroke-width="0.9"><rect x="0.6" y="1.6" width="10.8" height="9.8"/><path d="M0.6,4H11.4M3,0.2V2.4M6,0.2V2.4M9,0.2V2.4M2.4,6.4H5M2.4,8.6H5M6.6,7.4L7.8,8.8L9.8,6"/></svg>
<div class="abs" style="left:1867px;top:928.5px;width:36px;height:35.5px;background:#0084ff;border-radius:0 0 0 4px"></div>
<svg class="abs" style="left:1878px;top:939px" width="15" height="15" viewBox="0 0 16 16" fill="none" stroke="#fff" stroke-width="1.2"><path d="M6.6,1.2H9.4L9.9,3.2L11.6,4.2L13.6,3.6L15,6L13.5,7.4V8.6L15,10L13.6,12.4L11.6,11.8L9.9,12.8L9.4,14.8H6.6L6.1,12.8L4.4,11.8L2.4,12.4L1,10L2.5,8.6V7.4L1,6L2.4,3.6L4.4,4.2L6.1,3.2Z"/><circle cx="8" cy="8" r="2.4"/></svg>
<div id="scroll" class="abs"><div id="thumb" class="abs"></div></div>
</body></html>
